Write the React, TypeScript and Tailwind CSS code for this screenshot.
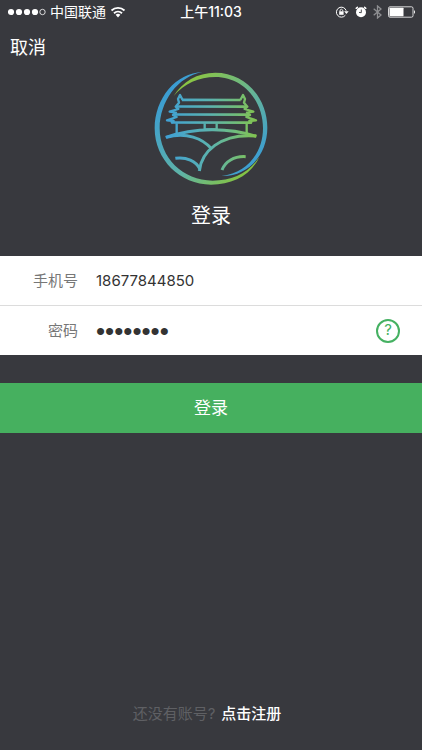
import { useState } from "react";

const Logo = () => (
  <svg viewBox="0 0 396 396" className="size-33" fill="none" aria-hidden="true">
    <defs>
      <linearGradient id="roof" gradientUnits="userSpaceOnUse" x1="62" y1="0" x2="334" y2="0">
        <stop offset="0" stopColor="#3fa0d5" />
        <stop offset="0.5" stopColor="#5cb3ad" />
        <stop offset="1" stopColor="#82c450" />
      </linearGradient>
      <linearGradient id="ringLeft" gradientUnits="userSpaceOnUse" x1="50" y1="110" x2="290" y2="360">
        <stop offset="0" stopColor="#3b9dd3" />
        <stop offset="0.6" stopColor="#5fb3a6" />
        <stop offset="1" stopColor="#86c43f" />
      </linearGradient>
      <linearGradient id="ringRight" gradientUnits="userSpaceOnUse" x1="110" y1="70" x2="330" y2="310">
        <stop offset="0" stopColor="#8cc63f" />
        <stop offset="0.5" stopColor="#66b596" />
        <stop offset="1" stopColor="#3b9dd3" />
      </linearGradient>
    </defs>

    {/* Anillo */}
    <path
      fill="url(#ringLeft)"
      d="M173 36C92 38 29 116 29 205C29 299 105 374 198 374C262 374 318 346 343 291C311 340 262 362 203 362C113 362 44 293 44 205C44 125 98 49 173 36Z"
    />
    <path
      fill="url(#ringRight)"
      d="M86 108C112 65 157 38 211 38C300 38 367 113 367 203C367 284 310 350 230 348C303 341 354 280 354 205C354 119 292 51 211 51C162 51 118 70 86 108Z"
    />

    {/* Tejados y columnas */}
    <g stroke="url(#roof)" strokeLinejoin="round">
      <path strokeWidth="8" d="M111 119.500L287 120" />
      <path strokeWidth="8" d="M94 139.500L306 140M86 163.500L312 164M80 187.500L320 188" />
      <path strokeWidth="7" d="M95 190V219M305 190V219M179 190V209M215 190V209" />
      <path strokeWidth="6" d="M179 207.500L215 208" />
      <path
        strokeWidth="7"
        d="M113 120L105 105L99 117L102 128L92 140L100 147L74 155L93 158L84 165L95 171L66 181L86 183L78 189"
      />
      <path
        strokeWidth="7"
        d="M286 120L294 105L300 117L297 128L307 140L299 147L325 155L306 158L315 165L304 171L333 181L313 183L321 189"
      />
    </g>

    {/* Colinas */}
    <g stroke="url(#roof)" strokeWidth="9">
      <path d="M62 232C150 202 251 202 334 229" />
      <path d="M64 232C124 215 173 236 198 265" />
      <path d="M163 333C169 277 224 219 334 228" />
      <path d="M91 295C125 290 153 304 164 326" />
      <path d="M231 330C240 305 267 288 302 290" />
    </g>
  </svg>
);

const StatusBar = () => (
  <header className="relative flex h-6 items-center justify-between pl-2 pr-1.5 text-sm">
    <div className="flex items-center">
      <svg width="38" height="8" viewBox="0 0 38 8" aria-hidden="true">
        <g fill="#fff">
          <circle cx="3" cy="4" r="3.100" />
          <circle cx="11" cy="4" r="3.100" />
          <circle cx="19" cy="4" r="3.100" />
          <circle cx="27" cy="4" r="3.100" />
        </g>
        <circle cx="34.500" cy="4" r="2.700" fill="none" stroke="#fff" strokeWidth="0.800" />
      </svg>
      <span className="ml-1">中国联通</span>
      <svg width="16" height="12" viewBox="0 0 16 12" className="ml-1" fill="none" stroke="#fff" aria-hidden="true">
        <path strokeWidth="1.900" d="M1.500 4.500C5.200 1 10.800 1 14.500 4.500M4 7.200C6.300 5.100 9.700 5.100 12 7.200" />
        <path fill="#fff" stroke="none" d="M5.600 8.800Q8 6.900 10.400 8.800L8 11.400Z" />
      </svg>
    </div>
    <span className="absolute inset-x-0 text-center font-medium">上午11:03</span>
    <div className="flex items-center">
      {/* Bloqueo de rotación */}
      <svg width="14" height="12" viewBox="0 0 14 12" fill="none" stroke="#fff" aria-hidden="true">
        <path d="M10.400 9.200A5 5 0 1 1 11.200 4.700" />
        <path fill="#fff" stroke="none" d="M9.100 5.300H13.700L11.400 8Z" />
        <path strokeWidth="0.900" d="M5 5.500V4.200Q6.400 2.200 7.800 4.200V5.500" />
        <path fill="#fff" stroke="none" d="M4.200 5.300H8.600V8.800H4.200Z" />
      </svg>
      {/* Alarma */}
      <svg width="12" height="12" viewBox="0 0 12 12" className="ml-1.5" aria-hidden="true">
        <circle cx="6" cy="6.300" r="5" fill="#fff" />
        <path stroke="#fff" strokeWidth="1.500" strokeLinecap="round" d="M1.200 2.300L2.400 1.300M10.800 2.300L9.600 1.300" />
        <path fill="none" stroke="#38393e" strokeWidth="0.900" d="M6.300 3.500V6.700L4 6.400" />
      </svg>
      {/* Bluetooth */}
      <svg width="9" height="14" viewBox="0 0 9 14" className="ml-1.5" fill="none" stroke="#8e8f92" strokeWidth="1.300" aria-hidden="true">
        <path d="M0.700 3.800L8 10L4.500 13V1L8 4L0.700 10.200" />
      </svg>
      <svg width="28" height="12" viewBox="0 0 28 12" className="ml-1.5" aria-hidden="true">
        <rect x="0.500" y="0.800" width="24.500" height="10.400" rx="1.500" fill="none" stroke="#fff" strokeWidth="0.800" />
        <rect x="1.500" y="1.800" width="14" height="8.400" rx="0.500" fill="#fff" />
        <path fill="#fff" d="M26 4Q28 6 26 8Z" />
      </svg>
    </div>
  </header>
);

export default function App() {
  const [phone, setPhone] = useState("18677844850");
  const [password, setPassword] = useState("password");

  return (
    <div className="flex min-h-screen flex-col bg-[#38393e] font-['Inter','Noto_Sans_CJK_SC',sans-serif] text-white">
      <StatusBar />

      <nav className="flex h-9 items-end px-2.5">
        <button type="button" className="text-lg leading-6">
          取消
        </button>
      </nav>

      <form className="flex flex-col" onSubmit={(e) => e.preventDefault()}>
        <div className="flex flex-col items-center">
          <Logo />
          <h1 className="mt-2 text-xl leading-8">登录</h1>
        </div>

        {/* Campos */}
        <div className="mt-6 bg-white text-[15px] text-[#333]">
          <div className="flex h-[50px] items-center border-b border-[#dcdcdc]">
            <label htmlFor="phone" className="w-24 pr-4.5 pt-0.5 text-right text-[#777]">
              手机号
            </label>
            <input
              id="phone"
              type="tel"
              value={phone}
              onChange={(e) => setPhone(e.target.value)}
              className="min-w-0 flex-1 pt-0.5 outline-none"
            />
          </div>
          <div className="flex h-[49px] items-center pr-5.5">
            <label htmlFor="password" className="w-24 pr-4.5 pt-0.5 text-right text-[#777]">
              密码
            </label>
            <input
              id="password"
              type="password"
              value={password}
              onChange={(e) => setPassword(e.target.value)}
              className="h-8 min-w-0 flex-1 pt-0.5 font-['Liberation_Sans',sans-serif] text-[26px] outline-none"
            />
            <button
              type="button"
              aria-label="忘记密码"
              className="flex size-6 items-center justify-center rounded-full border-2 border-[#45b162] text-[15px] text-[#45b162]"
            >
              ?
            </button>
          </div>
        </div>

        <button type="submit" className="mt-7 h-[50px] bg-[#46b05f] pt-0.5 text-[17px]">
          登录
        </button>
      </form>

      <footer className="mt-auto flex justify-center gap-1.5 pb-6 pr-2 text-[15px] leading-6">
        <span className="text-[#5f6064]">还没有账号?</span>
        <a href="#register" className="font-medium">
          点击注册
        </a>
      </footer>
    </div>
  );
}
